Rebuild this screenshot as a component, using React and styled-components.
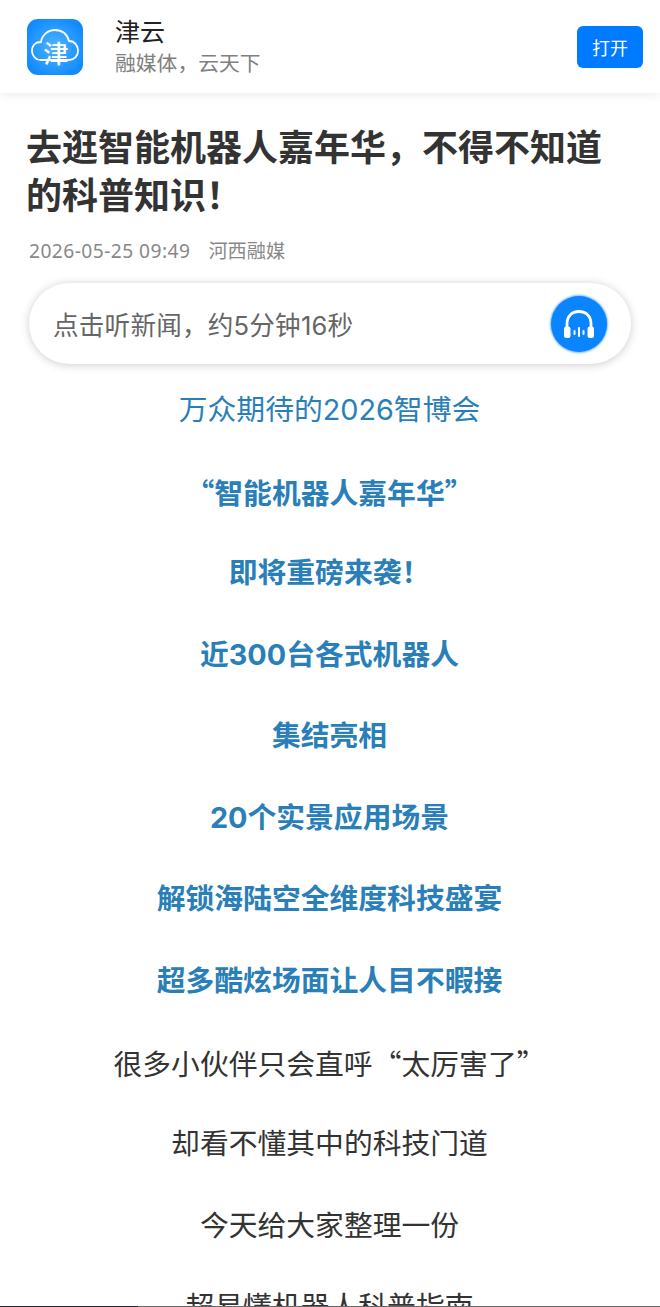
import React from "react";
import styled, { createGlobalStyle } from "styled-components";

const GlobalStyle = createGlobalStyle`
  html, body {
    margin: 0;
    padding: 0;
    background: #fff;
    height: 100%;
    overflow: hidden;
  }
  body {
    font-family: Inter, "Noto Sans CJK SC", sans-serif;
  }
`;

const Page = styled.div`
  position: relative;
  width: 660px;
  height: 1307px;
  overflow: hidden;
  background: #fff;
`;

const Header = styled.header`
  display: flex;
  align-items: center;
  height: 93px;
  padding: 0 17px 0 27px;
  box-sizing: border-box;
  box-shadow: 0 2px 10px rgba(0, 0, 0, 0.08);
`;

const AppName = styled.div`
  margin-left: 32px;
  padding-top: 2px;
  flex: 1;
`;

const Name = styled.div`
  font-size: 25px;
  line-height: 30px;
  color: #222;
`;

const Slogan = styled.div`
  margin-top: 3px;
  font-size: 20.8px;
  line-height: 28px;
  color: #808080;
`;

const OpenButton = styled.button`
  width: 66px;
  height: 42px;
  border: none;
  border-radius: 6px;
  background: #007aff;
  color: #fff;
  font-family: inherit;
  font-size: 18px;
  padding: 0;
`;

const Article = styled.main`
  padding: 0 27px 0 26px;
`;

const Title = styled.h1`
  margin: 31px 0 0;
  font-size: 36px;
  line-height: 48px;
  font-weight: 700;
  color: #333;
`;

const Meta = styled.div`
  display: flex;
  gap: 18px;
  margin: 17px 0 0 3px;
  font-size: 19.2px;
  line-height: 28px;
  color: #888;
`;

const DateText = styled.span`
  font-family: "Noto Sans", sans-serif;
  letter-spacing: 0.45px;
`;

const Listen = styled.div`
  display: flex;
  align-items: center;
  justify-content: space-between;
  box-sizing: border-box;
  height: 81px;
  margin: 18px 2px 0 3px;
  padding: 0 24px;
  border-radius: 41px;
  background: #fff;
  box-shadow: 0 1px 10px rgba(0, 0, 0, 0.2);
  font-size: 25.6px;
  letter-spacing: 0.2px;
  color: #666;
`;

const PlayButton = styled.div`
  display: flex;
  align-items: center;
  justify-content: center;
  width: 56px;
  height: 56px;
  border-radius: 50%;
  background: #0a84ff;
  box-shadow: 0 0 2px 1px rgba(90, 170, 255, 0.8);
`;

const Body = styled.section`
  margin-top: 24px;
`;

const Line = styled.p`
  height: 43.2px;
  margin: 0 0 38.4px;
  font-size: 28.8px;
  line-height: 43.2px;
  text-align: center;
  color: ${(props) => (props.$blue ? "#2a7fb8" : "#333")};
  font-weight: ${(props) => (props.$bold ? 700 : 400)};
`;

const Quote = styled.span`
  font-family: "Noto Sans CJK SC", sans-serif;
`;

const Scrollbar = styled.div`
  position: absolute;
  left: 0;
  right: 0;
  bottom: 0;
  height: 1px;
  background: #666;
`;

const ScrollThumb = styled.div`
  width: 138px;
  height: 1px;
  background: #22222e;
`;

const LogoIcon = () => (
  <svg width="56" height="56" viewBox="0 0 56 56">
    <defs>
      <radialGradient id="logoBg" cx="50%" cy="50%" r="65%">
        <stop offset="0%" stopColor="#4db5ff" />
        <stop offset="100%" stopColor="#0a84ff" />
      </radialGradient>
    </defs>
    <rect width="56" height="56" rx="11" fill="url(#logoBg)" />
    <path
      d="M14 41 C8 41 5 36 5 32 C5 26 9 23 14 23 C15 16 21 11 28 11 C35 11 40 15 42 22 C48 22 51 27 51 32 C51 37 47 41 42 41 Z"
      fill="none"
      stroke="#fff"
      strokeWidth="1.8"
    />
    <text
      x="29"
      y="44"
      textAnchor="middle"
      fontSize="25"
      fontWeight="500"
      fill="#fff"
      fontFamily='"Noto Sans CJK SC", sans-serif'
    >
      津
    </text>
  </svg>
);

const HeadphoneIcon = () => (
  <svg width="30" height="28" viewBox="0 0 30 28" fill="#fff">
    <path
      d="M3 18 V14 C3 6 8 1.5 15 1.5 C22 1.5 27 6 27 14 V18"
      fill="none"
      stroke="#fff"
      strokeWidth="2.8"
    />
    <rect x="0" y="16.5" width="6.5" height="11.5" rx="2.5" />
    <rect x="23.5" y="16.5" width="6.5" height="11.5" rx="2.5" />
    <rect x="9.5" y="20" width="2" height="5" rx="1" />
    <rect x="14" y="17" width="2" height="10" rx="1" />
    <rect x="18.5" y="20" width="2" height="5" rx="1" />
  </svg>
);

const lines = [
  { text: "万众期待的2026智博会", blue: true },
  { text: <><Quote>“</Quote>智能机器人嘉年华<Quote>”</Quote></>, blue: true, bold: true },
  { text: "即将重磅来袭！", blue: true, bold: true },
  { text: "近300台各式机器人", blue: true, bold: true },
  { text: "集结亮相", blue: true, bold: true },
  { text: "20个实景应用场景", blue: true, bold: true },
  { text: "解锁海陆空全维度科技盛宴", blue: true, bold: true },
  { text: "超多酷炫场面让人目不暇接", blue: true, bold: true },
  { text: <>很多小伙伴只会直呼<Quote>“</Quote>太厉害了<Quote>”</Quote></> },
  { text: "却看不懂其中的科技门道" },
  { text: "今天给大家整理一份" },
  { text: "超易懂机器人科普指南" },
];

export default function App() {
  return (
    <Page>
      <GlobalStyle />
      <Header>
        <LogoIcon />
        <AppName>
          <Name>津云</Name>
          <Slogan>融媒体，云天下</Slogan>
        </AppName>
        <OpenButton>打开</OpenButton>
      </Header>
      <Article>
        <Title>去逛智能机器人嘉年华，不得不知道的科普知识！</Title>
        <Meta>
          <DateText>2026-05-25 09:49</DateText>
          <span>河西融媒</span>
        </Meta>
        <Listen>
          <span>点击听新闻，约5分钟16秒</span>
          <PlayButton>
            <HeadphoneIcon />
          </PlayButton>
        </Listen>
        <Body>
          {lines.map((line, i) => (
            <Line key={i} $blue={line.blue} $bold={line.bold}>
              {line.text}
            </Line>
          ))}
        </Body>
      </Article>
      <Scrollbar>
        <ScrollThumb />
      </Scrollbar>
    </Page>
  );
}
